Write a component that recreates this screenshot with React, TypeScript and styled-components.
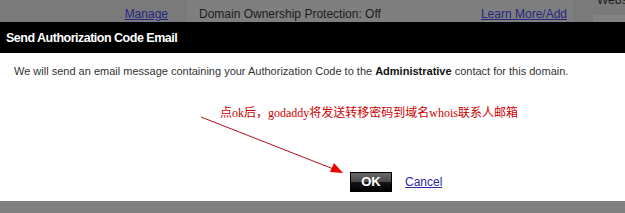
import React from "react";
import styled, { createGlobalStyle } from "styled-components";

const Global = createGlobalStyle`
  html, body { margin: 0; padding: 0; background: #808080; }
  body { width: 625px; height: 213px; overflow: hidden; font-family: "Liberation Sans", Arial, sans-serif; }
`;

const Page = styled.div`
  width: 625px;
  height: 213px;
  display: flex;
  flex-direction: column;
  background: #808080;
`;

const BackStrip = styled.div`
  height: 22px;
  display: grid;
  grid-template-columns: 187px 386px 20px 1fr;
  background: #7a7a7a;
  font-size: 12px;
  color: #1c1c1c;
  overflow: hidden;
`;

const BackCell = styled.div<{ $bg?: string; $top?: number }>`
  display: flex;
  align-items: flex-end;
  padding-bottom: 1px;
  background: ${(p) => p.$bg || "transparent"};
  margin-top: ${(p) => p.$top || 0}px;
  position: relative;
`;

const BackLink = styled.a`
  color: #262680;
  text-decoration: underline;
  font-size: 12px;
`;

const ManageCell = styled(BackCell)`
  justify-content: flex-end;
  padding-right: 19px;
`;

const DomainCell = styled(BackCell)`
  justify-content: space-between;
  padding-left: 12px;
  padding-right: 6px;
`;

const WebsText = styled.span`
  position: absolute;
  left: 4px;
  top: -22px;
  font-size: 12px;
  line-height: 14px;
  color: #1c1c1c;
`;

const Dialog = styled.div`
  flex: 1;
  display: flex;
  flex-direction: column;
  position: relative;
`;

const TitleBar = styled.div`
  height: 31px;
  background: #000;
  display: flex;
  align-items: center;
  padding-left: 6px;
  padding-top: 1px;
  box-sizing: border-box;
`;

const Title = styled.h2`
  margin: 0;
  color: #fff;
  font-family: "Liberation Sans", Arial, sans-serif;
  font-weight: bold;
  font-size: 12.5px;
  letter-spacing: -0.5px;
`;

const Body = styled.div`
  flex: 1;
  background: #fff;
  display: flex;
  flex-direction: column;
  padding: 12px 0 0 14px;
`;

const Message = styled.p`
  margin: 0;
  font-size: 11px;
  color: #333;
  font-family: "Liberation Sans", Arial, sans-serif;
  strong { color: #111; font-weight: bold; }
`;

const Note = styled.p`
  margin: 29px 0 0 206px;
  font-size: 12px;
  line-height: 14px;
  color: #cc0000;
  font-family: "Liberation Serif", "Noto Sans CJK SC", serif;
`;

const Actions = styled.div`
  margin-top: auto;
  margin-bottom: 9px;
  margin-left: 336px;
  display: flex;
  align-items: center;
  gap: 13px;
`;

const OkButton = styled.button`
  width: 42px;
  height: 20px;
  border: 1px solid #000;
  background: linear-gradient(#6a6a6a 0%, #4a4a4a 48%, #151515 52%, #000 100%);
  color: #fff;
  font-family: "Liberation Sans", Arial, sans-serif;
  font-weight: bold;
  font-size: 13px;
  padding: 0;
  line-height: 18px;
`;

const CancelLink = styled.a`
  color: #2a2aa8;
  text-decoration: underline;
  font-size: 12px;
  font-family: "Liberation Sans", Arial, sans-serif;
`;

const ArrowLayer = styled.svg`
  position: absolute;
  left: 0;
  top: 0;
  pointer-events: none;
`;

const BottomStrip = styled.div`
  height: 12px;
  background: #808080;
`;

export default function App() {
  return (
    <>
      <Global />
      <Page>
        <BackStrip>
          <ManageCell>
            <BackLink>Manage</BackLink>
          </ManageCell>
          <DomainCell $bg="#7f7f7f">
            <span>Domain Ownership Protection: Off</span>
            <BackLink>Learn More/Add</BackLink>
          </DomainCell>
          <BackCell />
          <BackCell $bg="#828282" $top={15}>
            <WebsText>Webs</WebsText>
          </BackCell>
        </BackStrip>
        <Dialog>
          <TitleBar>
            <Title>Send Authorization Code Email</Title>
          </TitleBar>
          <Body>
            <Message>
              We will send an email message containing your Authorization Code to the <strong>Administrative</strong> contact for this domain.
            </Message>
            <Note>点ok后，godaddy将发送转移密码到域名whois联系人邮箱</Note>
            <Actions>
              <OkButton>OK</OkButton>
              <CancelLink>Cancel</CancelLink>
            </Actions>
          </Body>
          <ArrowLayer width="625" height="179" viewBox="0 0 625 179">
            <line x1="201" y1="95" x2="336" y2="148" stroke="#b01020" strokeWidth="1" />
            <polygon points="343,151 330,150 334,141" fill="#ee0000" />
          </ArrowLayer>
        </Dialog>
        <BottomStrip />
      </Page>
    </>
  );
}
